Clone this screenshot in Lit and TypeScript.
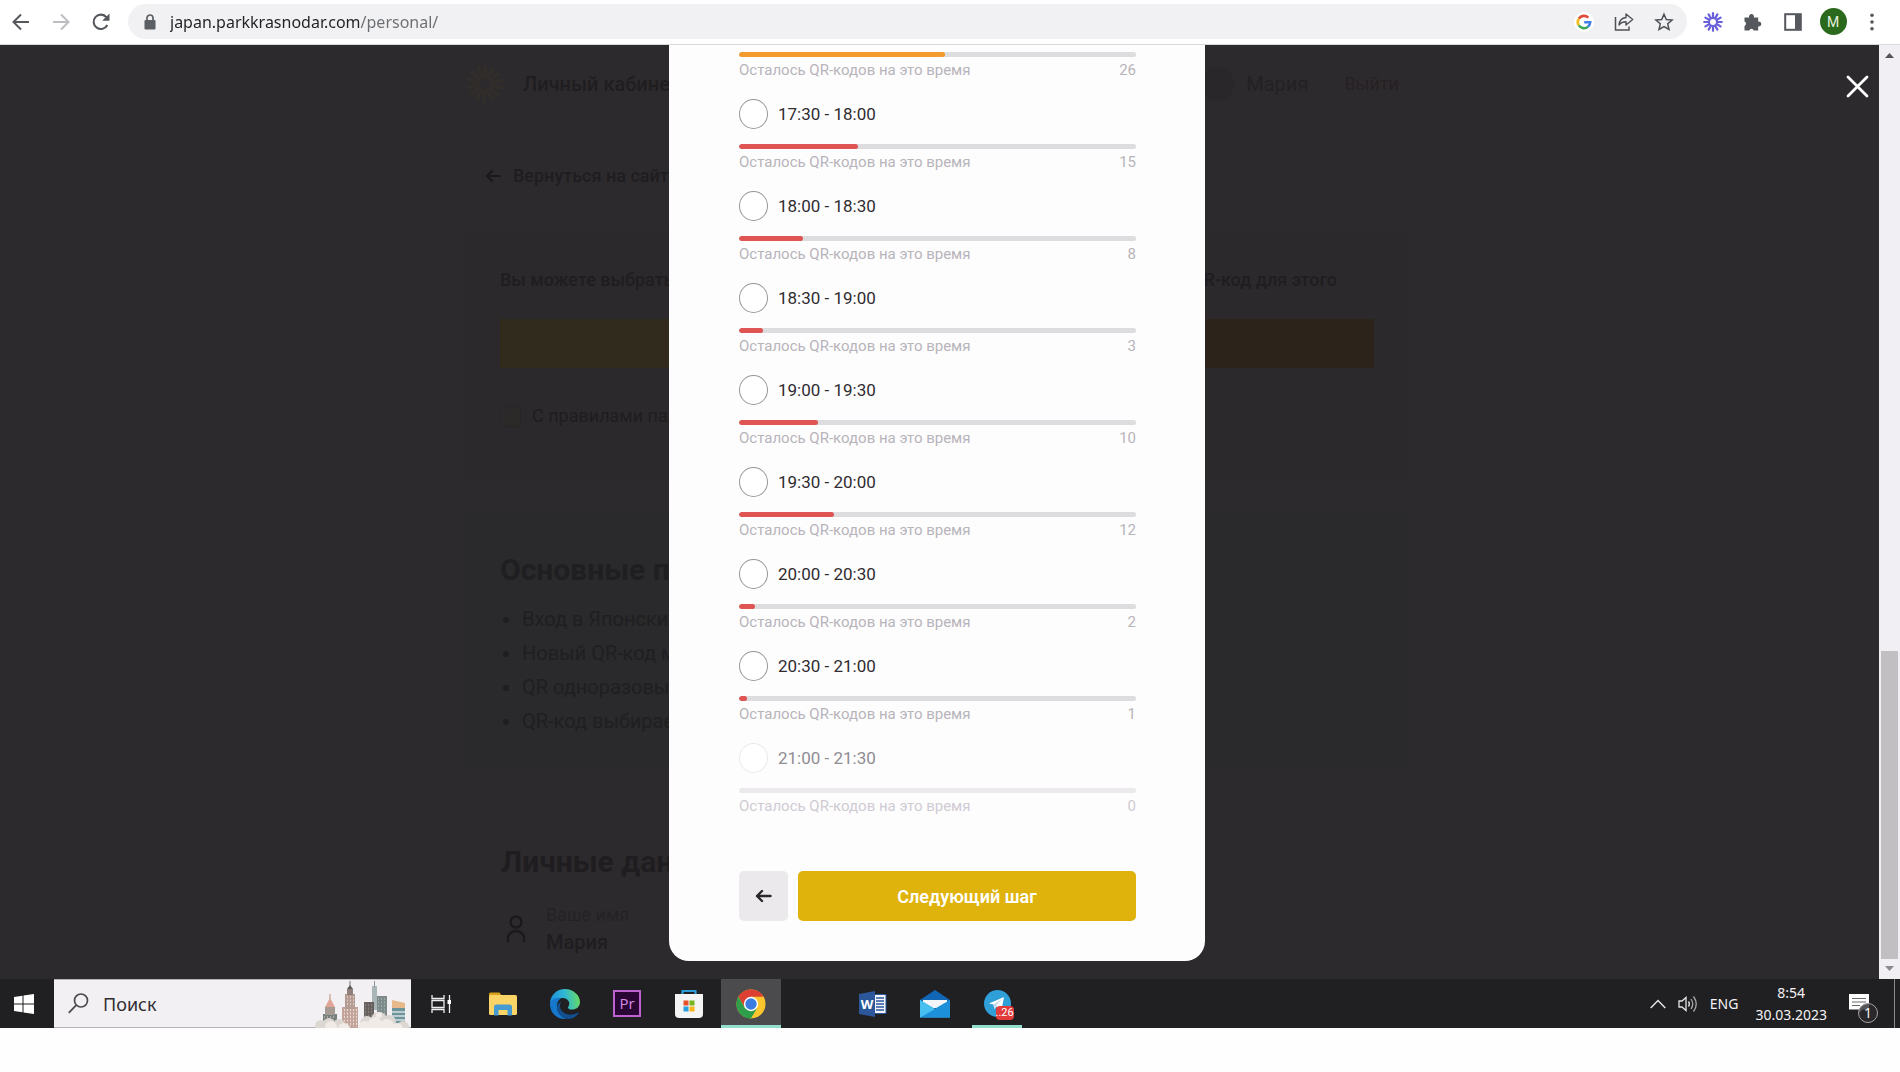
import { LitElement, html, css, svg, nothing } from "lit";
import { customElement, state } from "lit/decorators.js";

interface Slot {
  time: string;
  left: number;
  share: number;
  tone: string;
}

const SLOTS: Slot[] = [
  { time: "", left: 26, share: 52, tone: "amber" },
  { time: "17:30 - 18:00", left: 15, share: 30, tone: "red" },
  { time: "18:00 - 18:30", left: 8, share: 16, tone: "red" },
  { time: "18:30 - 19:00", left: 3, share: 6, tone: "red" },
  { time: "19:00 - 19:30", left: 10, share: 20, tone: "red" },
  { time: "19:30 - 20:00", left: 12, share: 24, tone: "red" },
  { time: "20:00 - 20:30", left: 2, share: 4, tone: "red" },
  { time: "20:30 - 21:00", left: 1, share: 2, tone: "red" },
  { time: "21:00 - 21:30", left: 0, share: 0, tone: "red" },
];

const icon = (w: number, h: number, body: unknown) =>
  html`<svg width=${w} height=${h} viewBox="0 0 ${w} ${h}" fill="none" aria-hidden="true">${body}</svg>`;

const reset = css`
  *, *::before, *::after { box-sizing: border-box; }
  button { border: 0; padding: 0; background: none; font: inherit; color: inherit; display: grid; place-items: center; }
  a { color: inherit; text-decoration: none; }
  svg { display: block; }
`;

@customElement("browser-toolbar")
export class BrowserToolbar extends LitElement {
  static styles = [reset, css`
    :host { display: flex; align-items: center; height: 45px; padding: 0 14px 1px 6px; background: #fff; border-bottom: 1px solid #d9d9db; font-family: "Noto Sans", "Open Sans", sans-serif; }
    .nav { display: flex; gap: 10px; }
    .nav button, .ext button { width: 30px; height: 30px; }
    .bar { flex: 1; display: flex; align-items: center; gap: 12px; height: 35px; margin-left: 12px; padding: 0 8px 0 14px; border-radius: 18px; background: #f1f1f3; }
    .url { flex: 1; min-width: 0; height: 30px; border: 0; padding: 0; outline: 0; font: 16px "Noto Sans", "Open Sans", sans-serif; color: transparent; background: linear-gradient(90deg, #202124 190px, #6a6d71 190px); -webkit-background-clip: text; background-clip: text; }
    .actions { display: flex; gap: 10px; }
    .actions button { width: 30px; height: 30px; }
    .ext { display: flex; gap: 10px; margin-left: 11px; }
    .ext .more { width: 28px; }
    .me { width: 27px; height: 27px; border-radius: 50%; background: #2b6a1d; color: #e4efdf; display: grid; place-items: center; font: 14px Roboto, sans-serif; }
  `];

  render() {
    return html`
      <div class="nav">
        <button aria-label="Назад">${icon(20, 20, svg`<path d="M18 10H3M10 2.500L2.500 10l7.500 7.500" stroke="#55585c" stroke-width="2"/>`)}</button>
        <button aria-label="Вперёд">${icon(20, 20, svg`<path d="M2 10h15M10 2.500l7.500 7.500-7.500 7.500" stroke="#bdbec1" stroke-width="2"/>`)}</button>
        <button aria-label="Обновить">${icon(20, 20, svg`<path d="M16.300 13a7.200 7.200 0 1 1-.8-7.700" stroke="#55585c" stroke-width="2.100"/><path d="M18.500 1.500v7.300h-7.300z" fill="#55585c"/>`)}</button>
      </div>
      <div class="bar">
        ${icon(16, 16, svg`<rect x="2.500" y="6" width="11" height="9.500" rx="1.200" fill="#5b5e62"/><path d="M5 6.500V4a3 3 0 0 1 6 0v2.500" stroke="#5b5e62" stroke-width="1.700"/>`)}
        <input class="url" type="text" aria-label="Адресная строка" value="japan.parkkrasnodar.com/personal/" />
        <div class="actions">
          <button aria-label="Google">${icon(20, 20, svg`
            <circle cx="10" cy="10" r="10" fill="#fff"/>
            <path d="M4.800 6.600A6.200 6.200 0 0 1 14.300 5.600" stroke="#e04a3b" stroke-width="2.600"/>
            <path d="M4.800 13.400a6.200 6.200 0 0 1 0-6.800" stroke="#f3bb1c" stroke-width="2.600"/>
            <path d="M14 14.700a6.200 6.200 0 0 1-9.200-1.300" stroke="#3ba757" stroke-width="2.600"/>
            <path d="M10.200 10.300h6a6.200 6.200 0 0 1-2.200 4.400" stroke="#3f7de8" stroke-width="2.600"/>`)}</button>
          <button aria-label="Поделиться">${icon(20, 20, svg`<path d="M1.500 5v13h13.500v-3.500" stroke="#4d5054" stroke-width="1.500"/><path d="M12 2l6.700 5.500L12 13V9.800c-3.500 0-5.500 1-7 3.200.4-4.400 2.600-7 7-7.500z" stroke="#4d5054" stroke-width="1.400" stroke-linejoin="round"/>`)}</button>
          <button aria-label="Добавить в закладки">${icon(20, 20, svg`<path d="M10 2.200l2.300 5.300 5.800.5-4.400 3.800 1.300 5.700-5-3-5 3 1.300-5.700L1.900 8l5.800-.5z" stroke="#4d5054" stroke-width="1.500"/>`)}</button>
        </div>
      </div>
      <div class="ext">
        <button aria-label="Loom">${icon(20, 20, svg`<g stroke="#6a60dc" stroke-width="2.200" stroke-linecap="round">
          ${Array.from({ length: 12 }, (_, i) => svg`<path d="M10 1.200v4.300" transform="rotate(${i * 30} 10 10)"/>`)}</g><circle cx="10" cy="10" r="4" stroke="#6a60dc" stroke-width="2"/>`)}</button>
        <button aria-label="Расширения">${icon(20, 20, svg`<path d="M1.500 5.500h4.700a2.500 2.500 0 1 1 4.600 0h4.400v4.200a2.400 2.400 0 1 1 0 4.600v4.200h-4.500a2.300 2.300 0 0 0-4.400 0H1.500v-4.600a2.300 2.300 0 0 0 0-4.300z" fill="#55585c"/>`)}</button>
        <button aria-label="Боковая панель">${icon(18, 18, svg`<rect x="1.200" y="1.200" width="15.600" height="15.600" stroke="#55585c" stroke-width="2"/><rect x="11" y="1" width="6" height="16" fill="#55585c"/>`)}</button>
        <button aria-label="Профиль"><span class="me">M</span></button>
        <button class="more" aria-label="Меню">${icon(4, 18, svg`<g fill="#55585c"><circle cx="2" cy="2.300" r="1.800"/><circle cx="2" cy="9" r="1.800"/><circle cx="2" cy="15.700" r="1.800"/></g>`)}</button>
      </div>`;
  }
}

@customElement("cabinet-page")
export class CabinetPage extends LitElement {
  static styles = [reset, css`
    :host { display: block; background: #2d2a2d; color: #1f1d20; font: 18px/24px Roboto, sans-serif; overflow: hidden; }
    .wrap { width: 942px; margin: 0 auto; padding-top: 19px; }
    header { display: flex; align-items: center; height: 40px; }
    .brand { margin-left: 18px; font-size: 20px; font-weight: 500; flex: 1; }
    .avatar { width: 34px; height: 34px; border-radius: 50%; background: #29272a; margin-right: 12px; }
    .who { font-size: 20px; margin-right: 36px; color: #232124; }
    .exit { margin-right: 8px; color: #262023; }
    .back { display: flex; align-items: center; gap: 12px; margin: 60px 0 0 20px; font-weight: 500; }
    .card { padding: 35px; margin-top: 42px; height: 250px; background: #2c292c; }
    .lead { display: flex; justify-content: space-between; padding: 3px 35px 0 0; font-weight: 500; }
    .take { width: calc(100% + 2px); height: 49px; margin: 27px 0 0; background: linear-gradient(90deg, #302b1c, #302b1c 20%, #2c241b 80%); }
    .agree { display: flex; align-items: center; gap: 11px; margin-top: 36px; }
    .agree input { appearance: none; width: 21px; height: 21px; margin: 0; border: 1px solid #272528; border-radius: 3px; background: linear-gradient(135deg, #2c292c, #2c2a27); }
    .rules { margin-top: 32px; height: 255px; padding: 40px 35px; background: #2a292b; color: #1f1f21; }
    h2 { margin: 0; font-size: 30px; line-height: 36px; font-weight: 700; }
    ul { margin: 14px 0 0; padding-left: 22px; font-size: 20px; line-height: 34px; }
    .person { margin-top: 77px; padding-left: 36px; }
    .field { display: flex; align-items: center; gap: 20px; margin-top: 22px; padding-left: 5px; }
    .field dl { margin: 0; }
    dt { line-height: 26px; color: #242225; }
    dd { margin: 0; font-size: 20px; line-height: 28px; font-weight: 500; }
  `];

  render() {
    return html`
      <div class="wrap">
        <header>
          ${icon(40, 40, svg`<g stroke="#302d2a" stroke-width="4" stroke-linecap="round">${Array.from({ length: 14 }, (_, i) =>
            svg`<path d="M20 3v10" transform="rotate(${i * 26} 20 20)"/>`)}</g>`)}
          <span class="brand">Личный кабинет</span>
          <span class="avatar"></span>
          <span class="who">Мария</span>
          <a class="exit" href="#">Выйти</a>
        </header>
        <a class="back" href="#">${icon(16, 14, svg`<path d="M15 7H2M7 2L2 7l5 5" stroke="#1b191c" stroke-width="2.200" stroke-linecap="round"/>`)}Вернуться на сайт</a>
        <section class="card">
          <div class="lead"><span>Вы можете выбрать</span><span>QR-код для этого</span></div>
          <button class="take" aria-label="QR-код"></button>
          <label class="agree"><input type="checkbox" />С правилами парка</label>
        </section>
        <section class="rules">
          <h2>Основные п</h2>
          <ul>
            <li>Вход в Японски</li>
            <li>Новый QR-код м</li>
            <li>QR одноразовы</li>
            <li>QR-код выбирае</li>
          </ul>
        </section>
        <section class="person">
          <h2>Личные дан</h2>
          <div class="field">
            ${icon(20, 28, svg`<g stroke="#1b191c" stroke-width="2.400" stroke-linecap="round"><circle cx="10" cy="7" r="5.500"/><path d="M2 26v-3a8 7 0 0 1 16 0v3"/></g>`)}
            <dl><dt>Ваше имя</dt><dd>Мария</dd></dl>
          </div>
        </section>
      </div>`;
  }
}

@customElement("slot-dialog")
export class SlotDialog extends LitElement {
  @state() private picked = "";

  static styles = [reset, css`
    :host { display: block; width: 536px; padding: 7px 69px 40px 70px; border-radius: 0 0 20px 20px; background: #fefdfe; font-family: Roboto, sans-serif; }
    .slots { display: flex; flex-direction: column; gap: 19px; }
    .slot { display: flex; flex-direction: column; }
    .pick { display: flex; align-items: center; gap: 10px; margin-bottom: 15px; font-size: 17px; line-height: 30px; color: #2f2c30; }
    .pick input { appearance: none; width: 29px; height: 30px; margin: 0; border: 1px solid #98959b; border-radius: 50%; background: #fff; }
    .pick input:checked { box-shadow: inset 0 0 0 7px #fff; background: #e0b20c; }
    .track { height: 5px; border-radius: 3px; background: #dddcde; overflow: hidden; }
    .fill { height: 5px; border-radius: 3px; }
    .amber { background: #f39c2d; }
    .red { background: #df5553; }
    .note { display: flex; justify-content: space-between; margin-top: 4px; font-size: 15px; line-height: 18px; color: #b7b4ba; margin-bottom: 1px; }
    .off .pick { color: #8f8c92; }
    .off .pick input { border-color: #ebe8ed; }
    .off .track { background: #ebe9ec; }
    .off .note { color: #cfcbd2; }
    .steps { display: flex; gap: 10px; margin-top: 55px; }
    .steps button { height: 50px; border-radius: 5px; }
    .prev { width: 49px; background: #ebe9ec; }
    .next { flex: 1; background: #e0b20c; color: #fff; font-size: 18px; font-weight: 600; }
  `];

  render() {
    return html`
      <div class="slots" role="radiogroup" aria-label="Время">
        ${SLOTS.map((s) => html`
          <div class="slot ${s.left ? "" : "off"}">
            ${s.time ? html`<label class="pick"><input type="radio" name="time" .checked=${this.picked === s.time} ?disabled=${!s.left}
              @change=${() => (this.picked = s.time)} />${s.time}</label>` : nothing}
            <div class="track"><div class="fill ${s.tone}" style="width:${s.share}%"></div></div>
            <div class="note"><span>Осталось QR-кодов на это время</span><span>${s.left}</span></div>
          </div>`)}
      </div>
      <div class="steps">
        <button class="prev" aria-label="Назад">${icon(18, 14, svg`<path d="M15.500 7H2M7 2L2 7l5 5" stroke="#2b282c" stroke-width="2.400" stroke-linecap="round" stroke-linejoin="round"/>`)}</button>
        <button class="next">Следующий шаг</button>
      </div>`;
  }
}

@customElement("task-bar")
export class TaskBar extends LitElement {
  static styles = [reset, css`
    :host { display: flex; height: 49px; background: #201f21; color: #f4f2f4; font-family: "Noto Sans", "Open Sans", sans-serif; }
    .start { width: 54px; padding-right: 6px; }
    .search { display: flex; align-items: center; width: 357px; padding-left: 14px; gap: 14px; background: #f2f0f3; border: solid #b5b3b6; border-width: 1px 0; }
    .search input { flex: 1; min-width: 0; border: 0; padding: 0; outline: 0; background: none; font: 18px "Noto Sans", "Open Sans", sans-serif; }
    .search input::placeholder { color: #302e31; }
    .apps { display: flex; flex: 1; margin-left: -1px; }
    .apps button { width: 62px; border: solid transparent; border-width: 0 1px; }
    .apps .open { background: #4b4a4c; background-clip: padding-box; box-shadow: inset 0 -3px #93dfcf; }
    .apps .gap { width: 60px; }
    .apps .running { width: 50px; margin: 0 6px; border: 0; box-shadow: inset 0 -3px #93dfcf; }
    .icon { position: relative; }
    .badge { position: absolute; left: 12px; top: 16px; min-width: 18px; border-radius: 4px; background: #e23b3b; color: #fff; font: 11px/14px Roboto, sans-serif; text-align: center; }
    .tray { display: flex; align-items: center; font-size: 14px; }
    .lang { margin: 0 17px 0 12px; }
    .clock { text-align: center; line-height: 22px; font-size: 14px; }
    .notes { margin: 0 15px 0 22px; }
    .count { position: absolute; left: 9px; top: 9px; width: 20px; height: 20px; border: 1px solid #a5a3a6; border-radius: 50%; background: #2d2b2ecc; font-size: 14px; line-height: 18px; text-align: center; }
    .edge { width: 6px; align-self: stretch; border-left: 1px solid #8a888b; }
  `];

  render() {
    return html`
      <button class="start" aria-label="Пуск">${icon(20, 20, svg`<path d="M0 3l8.500-1.200v7.700H0zM9.500 1.600L20 0v9.500H9.500zM0 10.500h8.500v7.700L0 17zM9.500 10.500H20V20L9.500 18.400z" fill="#fff"/>`)}</button>
      <div class="search">
        ${icon(21, 21, svg`<circle cx="13" cy="7.500" r="6.500" stroke="#4c4a4d" stroke-width="1.700"/><path d="M8.200 12.200L.8 19.800" stroke="#4c4a4d" stroke-width="1.800"/>`)}
        <input type="search" placeholder="Поиск" aria-label="Поиск" />
        ${icon(98, 48, this.skyline())}
      </div>
      <div class="apps">
        <button aria-label="Представление задач">${icon(20, 20, svg`<g stroke="#f0eef0" stroke-width="1.300"><path d="M1 1v3.500h12V1M1 19v-3.500h12V19M1 6.500h12v7H1zM18.500 1v18"/></g><path d="M16.500 6h4v4h-4z" fill="#fff"/>`)}</button>
        <button aria-label="Проводник">${icon(28, 24, svg`<path d="M0 2q0-1.500 1.500-1.500h9L13 4H0z" fill="#d9a21b"/><rect y="3" width="28" height="20" rx="1.500" fill="#fbd467"/><path d="M5 23.500V15q0-2.500 2.500-2.500h13Q23 12.500 23 15v8.500h-4.500V18h-9v5.500z" fill="#469bd0"/><path d="M11 18h6v5h-6z" fill="#fbd467"/>`)}</button>
        <button aria-label="Edge">${icon(30, 30, svg`
          <defs><linearGradient id="eg" x1="0" y1=".4" x2="1" y2=".3"><stop stop-color="#1c8fdd"/><stop offset=".5" stop-color="#30b8d4"/><stop offset="1" stop-color="#69dc5c"/></linearGradient></defs>
          <path d="M0 15C0 6 7 0 15 0s15 6 15 13c0 5-4 7.500-8 7.500s-4.500-2-3.500-3.300c2.500-3.200-.5-8.200-6-8.200C6 9 1 12 0 15z" fill="url(#eg)"/>
          <path d="M0 15C1 10 6 8.500 11 9.200c-3 2-4.500 5.300-4 9.300.6 5.500 5 10.500 10 11.300C7 31 0 24 0 15z" fill="#1678cc"/>
          <path d="M11.500 12.500c-3.300 4.500-1 10.500 5 12.500 4 1.300 8 .5 11.500-1.500.7-.3 1 .2.600.8C26 28 21.500 30.500 17 29.800 11 28.800 7 23.500 7 18c0-2.300 2-4.500 4.500-5.500z" fill="#124f91"/>`)}</button>
        <button aria-label="Premiere Pro">${icon(28, 27, svg`<rect x="1" y="1" width="26" height="25" fill="#2a0634" stroke="#bd63d0" stroke-width="2"/><text x="14" y="18.500" text-anchor="middle" font-family="Open Sans, sans-serif" font-size="15" fill="#d78be6">Pr</text>`)}</button>
        <button aria-label="Microsoft Store">${icon(30, 29, svg`<path d="M8.500 7V2h13v5" stroke="#2e9bd6" stroke-width="2.200"/><path d="M1 5h28v20q0 4-4 4H5q-4 0-4-4z" fill="#f5f4f5"/><path d="M9.500 11.500h5v5h-5z" fill="#e8502c"/><path d="M15.500 11.500h5v5h-5z" fill="#78b41a"/><path d="M9.500 17.500h5v5h-5z" fill="#2a9fe0"/><path d="M15.500 17.500h5v5h-5z" fill="#f7b51b"/>`)}</button>
        <button class="open" aria-label="Chrome">${icon(30, 30, svg`
          <circle cx="15" cy="15" r="14.500" fill="#fbc52d"/>
          <path d="M2.440 7.750A14.500 14.500 0 0 1 27.560 7.750H15L8.700 18.600z" fill="#dd4033"/>
          <path d="M2.440 7.750A14.500 14.500 0 0 0 15 29.500L21.300 18.600 15 22.300 8.700 18.600z" fill="#2f9e4b"/>
          <circle cx="15" cy="15" r="7.200" fill="#fff"/><circle cx="15" cy="15" r="5.700" fill="#3b7ce0"/>`)}</button>
        <span class="gap"></span>
        <button aria-label="Word">${icon(28, 26, svg`<path d="M12 3.500h15v19H12z" fill="#f1f5fb" stroke="#2b579a"/><path d="M17 7h8M17 10h8M17 13h8M17 16h8M17 19h8" stroke="#2b579a" stroke-width="1.400"/><path d="M0 3l16-3v26L0 23z" fill="#2b579a"/><text x="8" y="18" text-anchor="middle" font-family="Open Sans, sans-serif" font-weight="700" font-size="13" fill="#fff">W</text>`)}</button>
        <button aria-label="Почта">${icon(30, 28, svg`<path d="M0 10L15 0l15 10v6H0z" fill="#1167b5"/><path d="M3 10h24v8H3z" fill="#f3f5f8"/><path d="M0 10l15 9 15-9v17.500H0z" fill="#35aee9"/><path d="M0 27.500L30 10v17.500z" fill="#1c91da"/><path d="M0 10l15 9L0 27.500z" fill="#47c0f0"/>`)}</button>
        <button class="running" aria-label="Telegram"><span class="icon">${icon(27, 27, svg`<circle cx="13.500" cy="13.500" r="13.500" fill="#2f9fd8"/><path d="M5 13.500L20 7l-2.500 13-5-3.500-2.200 2.500-.8-4.500z" fill="#fff"/><path d="M9.500 14.500L18 9l-6 7-1.700 3z" fill="#c5dcea"/>`)}<span class="badge">..26</span></span></button>
      </div>
      <div class="tray">
        <button aria-label="Показать скрытые значки">${icon(16, 10, svg`<path d="M.7 9L8 1.500 15.300 9" stroke="#e6e4e6" stroke-width="1.500"/>`)}</button>
        <button class="sound" aria-label="Громкость">${icon(32, 18, svg`<g transform="translate(12)"><path d="M1 6h3l4-3.500v13L4 12H1z" stroke="#e6e4e6" stroke-width="1.300"/><path d="M10.500 6.500q1.800 2.500 0 5" stroke="#e6e4e6" stroke-width="1.300"/><path d="M13 4q3.500 5 0 10M15.500 1.500q5.500 7.500 0 15" stroke="#aaa8aa" stroke-width="1.300"/></g>`)}</button>
        <span class="lang">ENG</span>
        <div class="clock"><div>8:54</div><div>30.03.2023</div></div>
        <button class="notes" aria-label="Уведомления"><span class="icon">${icon(30, 20, svg`<path d="M0 0h20v15.500h-6.500L10 19v-3.500H0z" fill="#fff"/><path d="M3 4.500h14M3 8h14M3 11.500h8" stroke="#6b696c" stroke-width="1.200"/>`)}<span class="count">1</span></span></button>
        <span class="edge"></span>
      </div>`;
  }

  private skyline() {
    const windows = (x: number, y: number, w: number, h: number, c: string) =>
      svg`${Array.from({ length: Math.floor(w / 3) }, (_, i) => svg`<path d="M${x + 1.5 + i * 3} ${y + 2}v${h - 3}" stroke=${c} stroke-width="1" stroke-dasharray="2 1.500"/>`)}`;
    return svg`
      <path d="M10 34h14v14H10z" fill="#76807e"/><path d="M12 27h10v8H12z" fill="#a69a94"/><path d="M12 27l5-9 5 9z" fill="#e0a595"/><path d="M17 14v5" stroke="#b98c80"/>
      ${windows(10, 34, 14, 14, "#b5aaa4")}
      <path d="M29 27h16v21H29z" fill="#c2a49a"/><path d="M32 14h10v15H32z" fill="#b39a92"/><path d="M34 9h6v6h-6z" fill="#907f7a"/><path d="M34 9l3-4 3 4z" fill="#5d5a5c"/><path d="M37 1v5" stroke="#77706f"/>
      ${windows(30, 27, 15, 21, "#eadbd4")}${windows(33, 14, 9, 14, "#dfcdc6")}
      <path d="M59 6h5v24h-5z" fill="#a9b6b8"/><path d="M61.500 1v6" stroke="#899698"/><path d="M51 22h10v18H51z" fill="#66605f"/>
      ${windows(51, 22, 10, 16, "#8b807c")}
      <path d="M64 16h10v22H64z" fill="#7c8a8a"/>${windows(64, 16, 10, 20, "#9fabab")}
      <path d="M79 20l13 3v6H79z" fill="#e7b98a"/><path d="M79 28h13v20H79z" fill="#6d939b"/><path d="M79 32h13M79 36h13M79 40h13" stroke="#d6e2e4" stroke-width="1.500"/>
      <g fill="#ddd7d3"><circle cx="8" cy="46" r="6"/><circle cx="16" cy="44" r="6"/><circle cx="26" cy="45" r="6"/><circle cx="54" cy="43" r="7"/><circle cx="66" cy="40" r="8"/><circle cx="76" cy="42" r="7"/><circle cx="90" cy="47" r="6"/></g>
      <g fill="#f0ebe7"><circle cx="18" cy="47" r="6"/><circle cx="31" cy="49" r="6"/><circle cx="52" cy="48" r="7"/><circle cx="62" cy="44" r="7"/><circle cx="74" cy="46" r="7"/><circle cx="84" cy="49" r="6"/><circle cx="66" cy="35" r="3"/></g>`;
  }
}

@customElement("app-root")
export class AppRoot extends LitElement {
  static styles = [reset, css`
    :host { display: block; min-height: 100vh; background: #fefefe; }
    .view { display: grid; grid-template-columns: minmax(0, 1fr) 21px; }
    .stage { display: grid; grid-template: minmax(0, 1fr) / minmax(0, 1fr); }
    cabinet-page, .over { grid-area: 1 / 1; }
    cabinet-page { height: 0; min-height: 100%; padding-right: 7px; }
    .over { position: relative; display: flex; justify-content: center; padding: 0 5px 18px 0; }
    .close { position: absolute; right: 10px; top: 30px; width: 23px; height: 23px; }
    .scroll { display: flex; flex-direction: column; align-items: center; padding: 8px 0; background: #f1eff3; }
    .thumb { width: 17px; flex: 309; background: #c1bfc2; margin: 0 0 7px; }
    .space { flex: 594; }
  `];

  render() {
    return html`
      <browser-toolbar></browser-toolbar>
      <main class="view">
        <div class="stage">
          <cabinet-page></cabinet-page>
          <div class="over">
            <slot-dialog></slot-dialog>
            <button class="close" aria-label="Закрыть">${icon(23, 23, svg`<path d="M2 2l19 19M21 2L2 21" stroke="#fff" stroke-width="2.800" stroke-linecap="round"/>`)}</button>
          </div>
        </div>
        <div class="scroll">
          ${icon(9, 5, svg`<path d="M0 5l4.500-5L9 5z" fill="#55535a"/>`)}
          <div class="space"></div>
          <div class="thumb"></div>
          ${icon(9, 5, svg`<path d="M0 0l4.500 5L9 0z" fill="#8b898e"/>`)}
        </div>
      </main>
      <task-bar></task-bar>`;
  }
}
